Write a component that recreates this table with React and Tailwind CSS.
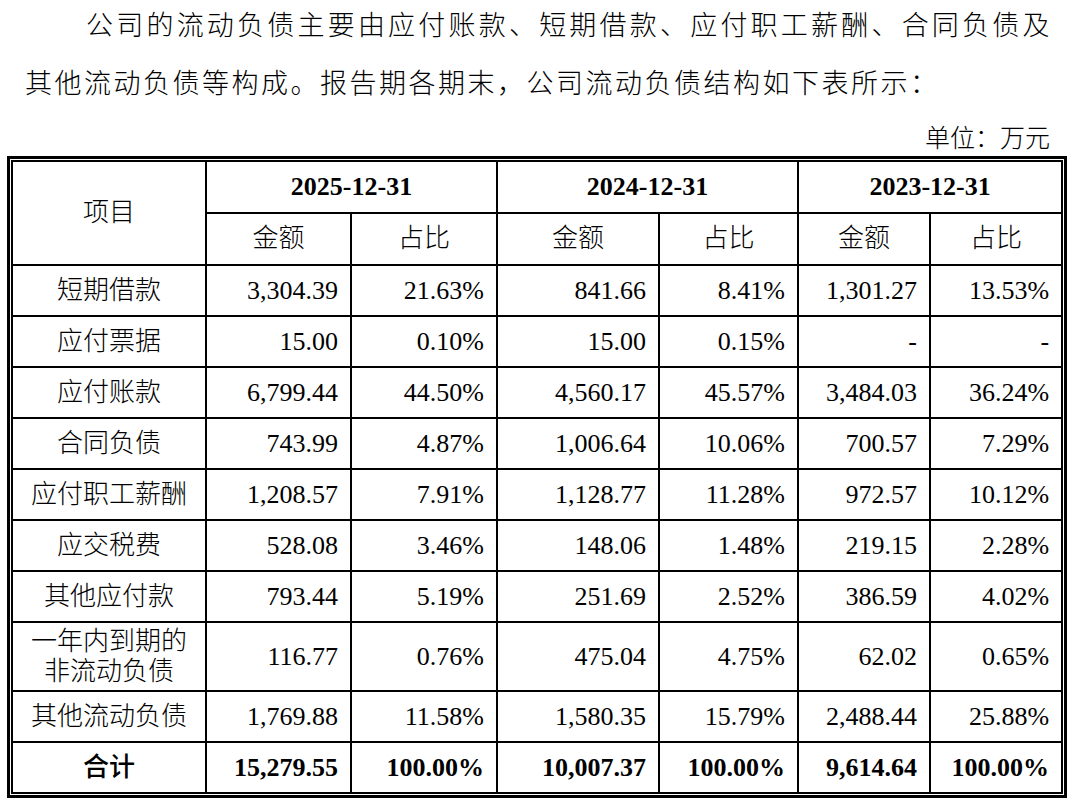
const ROWS = [
  ["短期借款", "3,304.39", "21.63%", "841.66", "8.41%", "1,301.27", "13.53%"],
  ["应付票据", "15.00", "0.10%", "15.00", "0.15%", "-", "-"],
  ["应付账款", "6,799.44", "44.50%", "4,560.17", "45.57%", "3,484.03", "36.24%"],
  ["合同负债", "743.99", "4.87%", "1,006.64", "10.06%", "700.57", "7.29%"],
  ["应付职工薪酬", "1,208.57", "7.91%", "1,128.77", "11.28%", "972.57", "10.12%"],
  ["应交税费", "528.08", "3.46%", "148.06", "1.48%", "219.15", "2.28%"],
  ["其他应付款", "793.44", "5.19%", "251.69", "2.52%", "386.59", "4.02%"],
  ["一年内到期的\n非流动负债", "116.77", "0.76%", "475.04", "4.75%", "62.02", "0.65%"],
  ["其他流动负债", "1,769.88", "11.58%", "1,580.35", "15.79%", "2,488.44", "25.88%"],
];

const TOTAL = ["合计", "15,279.55", "100.00%", "10,007.37", "100.00%", "9,614.64", "100.00%"];

const DATES = ["2025-12-31", "2024-12-31", "2023-12-31"];

const cell = "border-r-2 border-b-2 border-black";

const Row = ({ r, bold }) => {
  const twoLine = r[0].includes("\n");
  return (
    <tr className={twoLine ? "h-[69px]" : "h-[51px]"}>
      <td className={`${cell} text-center leading-[30px] whitespace-pre-line ${bold ? "font-medium" : ""}`}>
        {r[0]}
      </td>
      {r.slice(1).map((v, i) => (
        <td key={i} className={`${cell} text-right pr-[12px] ${bold ? "font-bold" : ""}`}>
          {v}
        </td>
      ))}
    </tr>
  );
};

export default function App() {
  return (
    <div className="w-[1080px] h-[810px] bg-white overflow-hidden text-black font-light font-['Liberation_Serif','Noto_Sans_CJK_SC',serif]">
      <p className="-mt-[3px] ml-[25px] mr-[28px] indent-[61px] text-justify text-[27px] leading-[58px] tracking-[2.5px]">
        公司的流动负债主要由应付账款、短期借款、应付职工薪酬、合同负债及其他流动负债等构成。报告期各期末，公司流动负债结构如下表所示：
      </p>
      <div className="mt-[11px] mr-[30px] text-right text-[25px] leading-[30px]">单位：万元</div>

      <div className="mt-[2px] ml-[7px] w-[1060px] border-[3px] border-black p-[1px]">
        <table className="w-[1052px] table-fixed border-separate border-spacing-0 border-t-2 border-l-2 border-black text-[26px] leading-[30px]">
          <colgroup>
            <col className="w-[194px]" />
            <col className="w-[145px]" />
            <col className="w-[146px]" />
            <col className="w-[162px]" />
            <col className="w-[139px]" />
            <col className="w-[132px]" />
            <col className="w-[132px]" />
          </colgroup>
          <thead>
            <tr className="h-[52px]">
              <td rowSpan={2} className={`${cell} text-center`}>
                项目
              </td>
              {DATES.map((d) => (
                <td key={d} colSpan={2} className={`${cell} text-center font-bold`}>
                  {d}
                </td>
              ))}
            </tr>
            <tr className="h-[52px]">
              {DATES.map((d) => [
                <td key={d + "a"} className={`${cell} text-center`}>
                  金额
                </td>,
                <td key={d + "b"} className={`${cell} text-center`}>
                  占比
                </td>,
              ])}
            </tr>
          </thead>
          <tbody>
            {ROWS.map((r) => (
              <Row key={r[0]} r={r} />
            ))}
            <Row r={TOTAL} bold />
          </tbody>
        </table>
      </div>
    </div>
  );
}
